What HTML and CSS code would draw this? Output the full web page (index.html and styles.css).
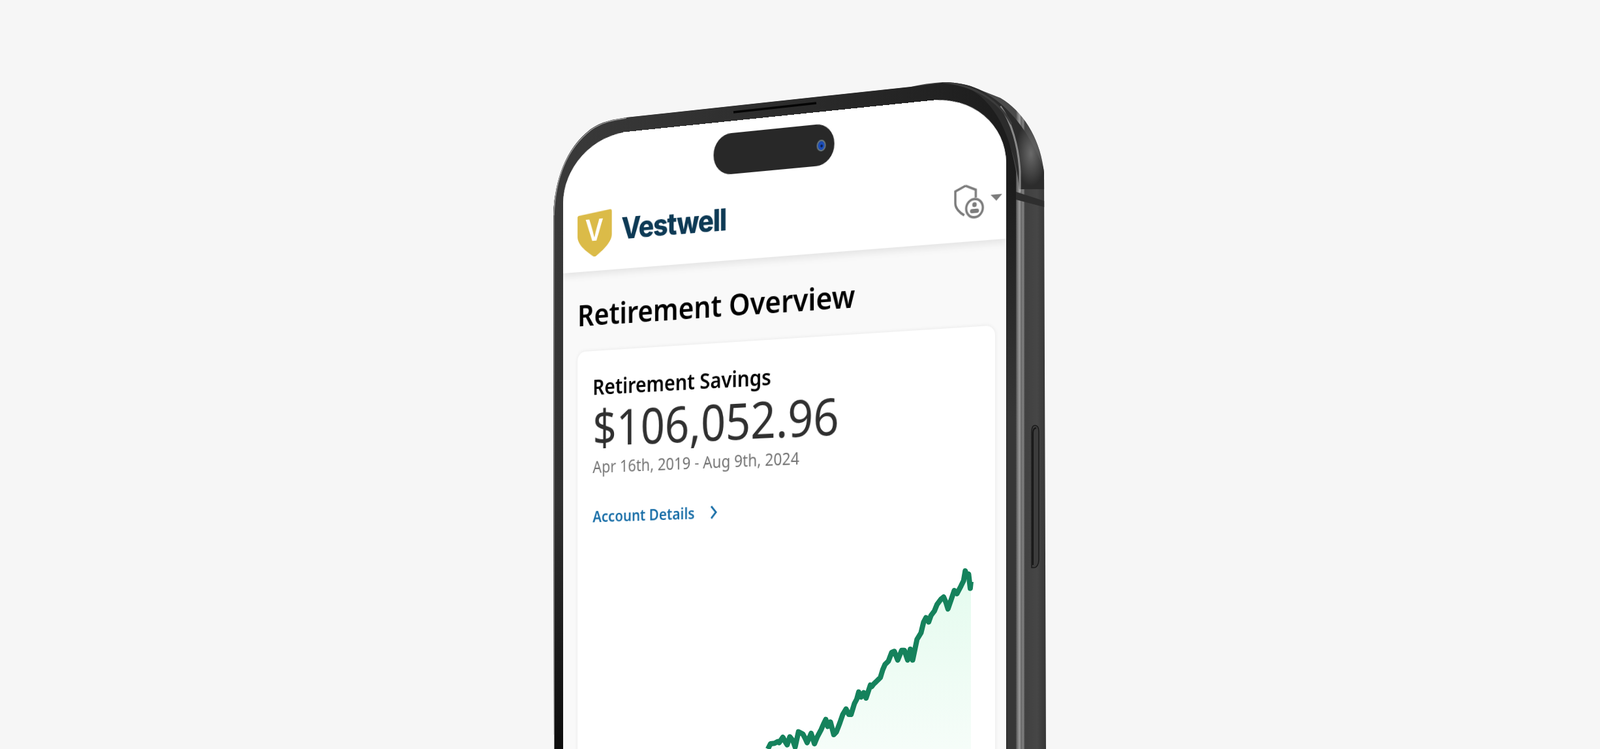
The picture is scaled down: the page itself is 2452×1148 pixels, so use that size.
FILE: index.html
```html
<!DOCTYPE html>
<html>
<head>
    <title>Retirement Overview</title>
    <link rel="stylesheet" href="styles.css">
</head>
<body>
    <div class="stage">
        <svg class="phone-body" width="2452" height="1148" viewBox="0 0 2452 1148">
            <defs>
                <clipPath id="outerClip">
                    <path d="M849 1148 L848 330 C850 270 870 225 905 198 C922 186 940 183 960 180 L1396 133 C1420 128 1435 126 1450 126 C1475 127 1490 132 1505 139 L1533 150 C1570 172 1595 215 1600 265 L1603 1148 Z"/>
                </clipPath>
                <linearGradient id="band" x1="1557" y1="0" x2="1603" y2="0" gradientUnits="userSpaceOnUse">
                    <stop offset="0" stop-color="#4a4a4a"/>
                    <stop offset="0.06" stop-color="#7a7a7a"/>
                    <stop offset="0.12" stop-color="#989898"/>
                    <stop offset="0.18" stop-color="#666666"/>
                    <stop offset="0.24" stop-color="#848484"/>
                    <stop offset="0.3" stop-color="#404040"/>
                    <stop offset="0.7" stop-color="#464646"/>
                    <stop offset="1" stop-color="#363636"/>
                </linearGradient>
                <linearGradient id="bezel" x1="848" y1="0" x2="1557" y2="0" gradientUnits="userSpaceOnUse">
                    <stop offset="0" stop-color="#3a3a3a"/>
                    <stop offset="0.25" stop-color="#333333"/>
                    <stop offset="0.7" stop-color="#262626"/>
                    <stop offset="1" stop-color="#1c1c1c"/>
                </linearGradient>
                <linearGradient id="leftEdge" x1="0" y1="300" x2="0" y2="1148" gradientUnits="userSpaceOnUse">
                    <stop offset="0" stop-color="#3a3a3a"/>
                    <stop offset="0.55" stop-color="#303030"/>
                    <stop offset="1" stop-color="#0c0c0c"/>
                </linearGradient>
                <linearGradient id="rightEdge" x1="0" y1="280" x2="0" y2="640" gradientUnits="userSpaceOnUse">
                    <stop offset="0" stop-color="#1c1c1c"/>
                    <stop offset="1" stop-color="#363636"/>
                </linearGradient>
                <radialGradient id="cornerGlow">
                    <stop offset="0" stop-color="#6a6a6a"/>
                    <stop offset="1" stop-color="#6a6a6a" stop-opacity="0"/>
                </radialGradient>
            </defs>
            <g clip-path="url(#outerClip)">
                <rect x="840" y="120" width="770" height="1028" fill="url(#band)"/>
                <path d="M1455 122 C1510 132 1575 170 1610 290 L1562 290 C1556 220 1530 170 1470 135 Z" fill="#2c2c2c"/>
                <ellipse cx="1580" cy="235" rx="24" ry="50" fill="url(#cornerGlow)"/>
                <path d="M1533 163 C1550 186 1561 225 1563 263 L1563 294" fill="none" stroke="#a8a8a8" stroke-width="3" opacity="0.75"/>
                <path d="M1557 294 L1603 309 L1603 318 L1557 306 Z" fill="#2e2e2e"/>
                <path d="M848 1148 L848 330 C850 270 870 225 905 198 C922 186 940 183 960 180 L1396 133 L1450 126 C1490 128 1540 160 1557 263 L1557 1148 Z" fill="url(#bezel)"/>
                <rect x="1543" y="280" width="14" height="868" fill="url(#rightEdge)"/>
                <path d="M1445 126 C1490 130 1530 152 1550 190" fill="none" stroke="#3c3c3c" stroke-width="3"/>
                <rect x="848" y="300" width="16" height="848" fill="url(#leftEdge)"/>
                <rect x="848" y="300" width="2" height="848" fill="#6e6e6e"/>
            </g>
            <path d="M849 330 C851 270 871 226 906 199 C923 187 940 184 960 181" fill="none" stroke="#9a9a9a" stroke-width="1.5"/>
            <path d="M1124 172 L1251 158" stroke="#050505" stroke-width="3.5" fill="none"/>
            <path d="M1581 870 L1581 662 C1581 654 1584 652 1586 652 C1590 652 1592 656 1592 662 L1592 858 C1592 866 1588 870 1585 870 Z" fill="#3c3c3c" stroke="#1a1a1a" stroke-width="1.5"/>
            <path d="M1583 866 L1583 664 C1583 658 1585 656 1588 656" fill="none" stroke="#161616" stroke-width="2"/>
        </svg>

        <div class="screen">
            <div class="island"><span class="camera"></span></div>

            <header class="topbar">
                <div class="brand">
                    <svg class="brand-mark" width="61" height="70" viewBox="0 0 61 70">
                        <path d="M3 6 L58 0 C60 0 61 1 61 3 L61 38 C61 50 45 62 32 70 C30 71 29 70 27 69 C14 60 0 50 0 38 L0 9 C0 7 1 6 3 6 Z" fill="#dbbb48"/>
                        <text class="brand-v" x="30" y="46" text-anchor="middle">V</text>
                    </svg>
                    <span class="brand-name">Vestwell</span>
                </div>
                <div class="account-menu">
                    <svg width="48" height="50" viewBox="0 0 48 50">
                        <path d="M19 2 L35 9 L35 20 M19 2 L3 9 L3 26 C3 33 10 40 17 44" fill="none" stroke="#7c7c7c" stroke-width="3.5"/>
                        <circle cx="33" cy="35" r="13" fill="#ffffff" stroke="#7c7c7c" stroke-width="3.5"/>
                        <circle cx="33" cy="30" r="3.5" fill="#7c7c7c"/>
                        <rect x="26" y="36" width="14" height="6" rx="3" fill="#7c7c7c"/>
                    </svg>
                    <span class="caret"></span>
                </div>
            </header>

            <main class="content">
                <h1 class="page-title">Retirement Overview</h1>
                <section class="card">
                    <h2 class="card-title">Retirement Savings</h2>
                    <p class="amount">$106,052.96</p>
                    <p class="dates">Apr 16th, 2019 - Aug 9th, 2024</p>
                    <a class="details-link" href="#">Account Details
                        <svg width="14" height="22" viewBox="0 0 14 22"><path d="M3 2 L11 11 L3 20" fill="none" stroke="#1a6fa8" stroke-width="3"/></svg>
                    </a>
                </section>
            </main>
        </div>

        <svg class="chart" width="2452" height="1148" viewBox="0 0 2452 1148">
            <defs>
                <linearGradient id="chartFill" x1="0" y1="150" x2="0" y2="1000" gradientUnits="userSpaceOnUse">
                    <stop offset="0" stop-color="#e4fbee"/>
                    <stop offset="1" stop-color="#f6fdf9"/>
                </linearGradient>
            </defs>
            <g transform="translate(840 820) scale(0.5102 0.3333)">
                <path fill="url(#chartFill)" d="M660 984 L668 960 L680 958 L690 950 L694 955 L705 930 L718 965 L726 928 L735 945 L742 975 L752 905 L765 915 L778 955 L790 912 L800 960 L808 930 L820 895 L834 848 L840 880 L848 860 L858 918 L866 905 L876 865 L885 825 L895 800 L903 825 L910 825 L920 775 L933 722 L940 745 L948 725 L955 750 L968 690 L978 685 L985 675 L998 655 L1005 620 L1012 595 L1022 580 L1032 540 L1040 535 L1050 575 L1062 530 L1070 530 L1080 575 L1088 525 L1095 575 L1108 480 L1120 450 L1128 400 L1135 380 L1143 400 L1150 370 L1160 350 L1168 320 L1180 295 L1188 285 L1195 310 L1201 340 L1210 300 L1220 255 L1228 270 L1240 235 L1248 210 L1253 165 L1258 190 L1263 180 L1268 245 L1270 215 L1270 1000 L660 1000 Z"/>
                <path class="chart-line" d="M660 984 L668 960 L680 958 L690 950 L694 955 L705 930 L712 950 L718 965 L726 928 L735 945 L742 975 L752 905 L765 915 L772 935 L778 955 L790 912 L800 960 L808 930 L820 895 L827 870 L834 848 L840 880 L848 860 L858 918 L866 905 L876 865 L885 825 L895 800 L903 825 L910 825 L920 775 L927 755 L933 722 L940 745 L948 725 L955 750 L968 690 L972 697 L978 685 L985 675 L998 655 L1005 620 L1012 595 L1022 580 L1032 540 L1040 535 L1050 575 L1062 530 L1070 530 L1080 575 L1088 525 L1095 575 L1108 480 L1120 450 L1128 400 L1135 380 L1143 400 L1150 370 L1160 350 L1168 320 L1180 295 L1188 285 L1195 310 L1201 340 L1210 300 L1220 255 L1228 270 L1240 235 L1248 210 L1253 165 L1258 190 L1263 180 L1268 245 L1270 215"/>
            </g>
        </svg>
    </div>
</body>
</html>
```

FILE: styles.css
```css
body {
    margin: 0;
    background-color: #f6f6f6;
    font-family: "Noto Sans", sans-serif;
}

.stage {
    position: relative;
    width: 2452px;
    height: 1148px;
    overflow: hidden;
}

.phone-body,
.chart {
    position: absolute;
    left: 0;
    top: 0;
}

/* the phone is turned in space, so the whole app is laid out flat and then warped */
.screen {
    position: absolute;
    left: 0;
    top: 0;
    width: 739px;
    height: 1000px;
    background-color: #f9f9f9;
    border-radius: 118px 118px 0 0 / 100px 100px 0 0;
    overflow: hidden;
    transform-origin: 0 0;
    transform: matrix3d(0.76278, -0.10901, 0, -0.00010103, 0, 1, 0, 0, 0, 0, 1, 0, 863, 212, 0, 1);
}

.island {
    position: absolute;
    left: 264px;
    top: 18px;
    width: 202px;
    height: 61px;
    padding-right: 14px;
    box-sizing: border-box;
    display: flex;
    align-items: center;
    justify-content: flex-end;
    background-color: #282828;
    border-radius: 30px;
}

.camera {
    width: 11px;
    height: 13px;
    margin-top: 2px;
    background: radial-gradient(circle at 55% 55%, #0a1a40 12%, #1b4fc4 30%, #16408f 100%);
    border: 2px solid #6c7a80;
    border-radius: 50%;
}

.topbar {
    height: 207px;
    padding: 115px 6px 22px 26px;
    box-sizing: border-box;
    display: flex;
    align-items: center;
    justify-content: space-between;
    background-color: #ffffff;
    box-shadow: 0 6px 10px rgba(0, 0, 0, 0.08);
}

.brand {
    display: flex;
    align-items: center;
    gap: 17px;
}

.brand-mark {
    display: block;
}

.brand-v {
    font-family: "Inter", sans-serif;
    font-weight: 600;
    font-size: 45px;
    fill: #ffffff;
}

.brand-name {
    margin-bottom: 9px;
    font-family: "Inter", sans-serif;
    font-weight: 800;
    font-size: 45px;
    letter-spacing: -1.5px;
    color: #0e3a55;
}

.account-menu {
    display: flex;
    align-items: center;
    gap: 10px;
}

.caret {
    width: 0;
    height: 0;
    margin-top: -6px;
    border-left: 9px solid transparent;
    border-right: 9px solid transparent;
    border-top: 9px solid #7c7c7c;
}

.content {
    padding: 0 17px 0 26px;
}

.page-title {
    margin: 35px 0 0;
    font-size: 45.8px;
    line-height: 60px;
    font-weight: 600;
    color: #000000;
}

.card {
    height: 700px;
    margin-top: 27px;
    padding: 34px 27px;
    box-sizing: border-box;
    background-color: #ffffff;
    border-radius: 14px;
    box-shadow: 0 0 6px rgba(0, 0, 0, 0.08);
}

.card-title {
    margin: 0;
    font-size: 32.5px;
    line-height: 41px;
    font-weight: 600;
    color: #000000;
}

.amount {
    margin: 0;
    font-size: 74px;
    line-height: 84px;
    font-weight: 400;
    color: #303030;
}

.dates {
    margin: 1px 0 0;
    font-size: 25px;
    line-height: 32px;
    color: #757575;
}

.details-link {
    display: flex;
    align-items: center;
    gap: 25px;
    margin-top: 44px;
    font-size: 23.5px;
    line-height: 32px;
    font-weight: 600;
    color: #1a6fa8;
    text-decoration: none;
}

.chart-line {
    fill: none;
    stroke: #15825c;
    stroke-width: 8;
    stroke-linejoin: round;
    vector-effect: non-scaling-stroke;
}
```
